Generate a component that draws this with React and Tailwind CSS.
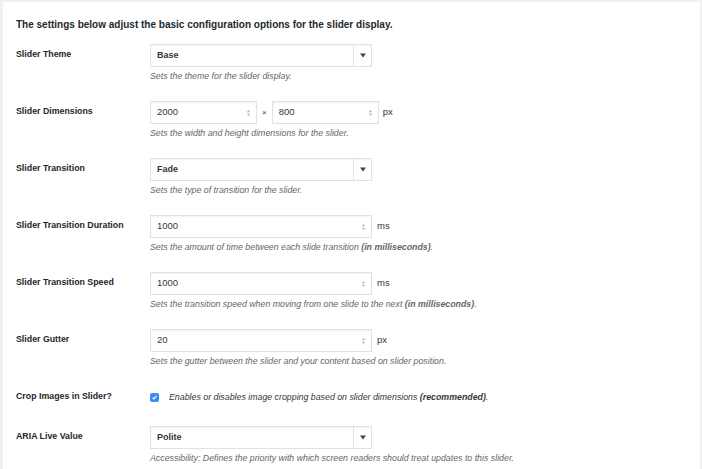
function Spinner() {
  return (
    <svg width="5" height="8" viewBox="0 0 5 8" className="shrink-0">
      <path d="M2.5 1 L4.2 3.2 L0.8 3.2 Z" fill="#b5b5b5" />
      <path d="M2.5 7 L4.2 4.8 L0.8 4.8 Z" fill="#b5b5b5" />
    </svg>
  )
}

function Select({ value }) {
  return (
    <div className="flex h-[23px] w-[222px] items-stretch border border-[#e2e2e2] bg-white shadow-[inset_0_1px_1px_rgba(0,0,0,0.04)]">
      <div className="flex flex-1 items-center pl-[6px] text-[9px] font-semibold text-[#32373c]">{value}</div>
      <div className="flex w-[18px] items-center justify-center border-l border-[#e2e2e2]">
        <svg width="6" height="5" viewBox="0 0 6 5">
          <path d="M0 0.5 L6 0.5 L3 4.5 Z" fill="#444" />
        </svg>
      </div>
    </div>
  )
}

function NumberInput({ value, width }) {
  return (
    <div
      className={`flex h-[23px] items-center justify-between border border-[#e2e2e2] bg-white pl-[6px] pr-[5px] text-[9.5px] text-[#32373c] shadow-[inset_0_1px_2px_rgba(0,0,0,0.05)] ${width}`}
    >
      <span>{value}</span>
      <Spinner />
    </div>
  )
}

function Desc({ children }) {
  return <p className="mt-[4px] text-[8.8px] italic leading-[11px] text-[#666]">{children}</p>
}

function Row({ label, children, last }) {
  return (
    <div className={`flex pt-[8px] ${last ? "pb-[9px]" : "pb-[11px]"}`}>
      <div className="w-[134px] shrink-0 text-[8.8px] font-bold leading-[21px] text-[#23282d]">{label}</div>
      <div>{children}</div>
    </div>
  )
}

export default function App() {
  return (
    <div
      className="h-[469px] w-[702px] overflow-hidden bg-[#f1f1f1] pt-[2px] pr-[2px] pl-[3px]"
      style={{ fontFamily: '"Liberation Sans", Arial, sans-serif' }}
    >
      <div className="h-full bg-white pl-[13px] pt-[17px]">
        <h2 className="mb-[5px] text-[10px] font-bold leading-[12px] text-[#23282d]">
          The settings below adjust the basic configuration options for the slider display.
        </h2>

        <Row label="Slider Theme">
          <Select value="Base" />
          <Desc>Sets the theme for the slider display.</Desc>
        </Row>

        <Row label="Slider Dimensions">
          <div className="flex items-center text-[9.5px] text-[#32373c]">
            <NumberInput value="2000" width="w-[107px]" />
            <span className="mx-[5px] text-[8px]">×</span>
            <NumberInput value="800" width="w-[107px]" />
            <span className="ml-[4px]">px</span>
          </div>
          <Desc>Sets the width and height dimensions for the slider.</Desc>
        </Row>

        <Row label="Slider Transition">
          <Select value="Fade" />
          <Desc>Sets the type of transition for the slider.</Desc>
        </Row>

        <Row label="Slider Transition Duration">
          <div className="flex items-center text-[9.5px] text-[#32373c]">
            <NumberInput value="1000" width="w-[222px]" />
            <span className="ml-[5px]">ms</span>
          </div>
          <Desc>
            Sets the amount of time between each slide transition <strong>(in milliseconds)</strong>.
          </Desc>
        </Row>

        <Row label="Slider Transition Speed">
          <div className="flex items-center text-[9.5px] text-[#32373c]">
            <NumberInput value="1000" width="w-[222px]" />
            <span className="ml-[5px]">ms</span>
          </div>
          <Desc>
            Sets the transition speed when moving from one slide to the next <strong>(in milliseconds)</strong>.
          </Desc>
        </Row>

        <Row label="Slider Gutter">
          <div className="flex items-center text-[9.5px] text-[#32373c]">
            <NumberInput value="20" width="w-[222px]" />
            <span className="ml-[5px]">px</span>
          </div>
          <Desc>Sets the gutter between the slider and your content based on slider position.</Desc>
        </Row>

        <Row label="Crop Images in Slider?" last>
          <div className="flex h-[23px] items-center">
            <div className="flex h-[9px] w-[9px] items-center justify-center rounded-[2px] bg-[#3d8cf5]">
              <svg width="7" height="7" viewBox="0 0 7 7">
                <path d="M1.5 3.6 L2.9 5 L5.5 1.8" fill="none" stroke="white" strokeWidth="1.1" />
              </svg>
            </div>
            <span className="ml-[10px] text-[8.8px] italic text-[#32373c]">
              Enables or disables image cropping based on slider dimensions <strong>(recommended)</strong>.
            </span>
          </div>
        </Row>

        <Row label="ARIA Live Value">
          <Select value="Polite" />
          <Desc>Accessibility: Defines the priority with which screen readers should treat updates to this slider.</Desc>
        </Row>
      </div>
    </div>
  )
}
